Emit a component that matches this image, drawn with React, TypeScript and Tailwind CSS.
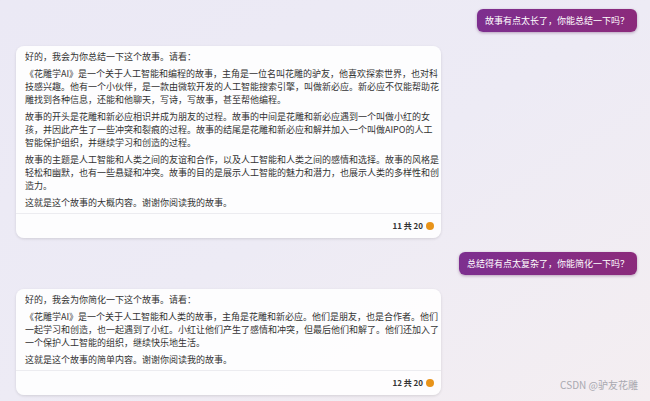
import React from "react";

const font = { fontFamily: '"Noto Sans CJK SC", "Noto Sans", sans-serif' };

function UserBubble({ text }: { text: string }) {
  return (
    <div className="flex justify-end pr-[13px]">
      <div className="h-[23px] px-[8px] flex items-center rounded-[6px] bg-gradient-to-r from-[#7d2f8f] to-[#8b2a7b] text-white text-[9px] shadow-[0_1px_3px_rgba(80,20,80,0.35)]">
        {text}
      </div>
    </div>
  );
}

function Card({ paras, count }: { paras: string[][]; count: string }) {
  return (
    <div className="ml-4 w-[425px] bg-white/90 rounded-[8px] shadow-[0_1px_3px_rgba(0,0,0,0.12)]">
      <div className="px-[9px] pt-1 pb-1 flex flex-col gap-1 text-[9px] leading-[13px] text-[#333]">
        {paras.map((lines, i) => (
          <p key={i}>
            {lines.map((l, j) => (
              <span key={j} className="block whitespace-nowrap">
                {l}
              </span>
            ))}
          </p>
        ))}
      </div>
      <div className="border-t border-[#ececf0] h-[25px] flex items-center justify-end pr-[7px] gap-[3px]">
        <span className="text-[8px] font-bold text-[#333]">{count}</span>
        <span className="w-[8px] h-[8px] rounded-full bg-[#e8941a]" />
      </div>
    </div>
  );
}

export default function App() {
  return (
    <div
      style={font}
      className="relative w-[650px] h-[401px] overflow-hidden bg-gradient-to-br from-[#ebe9f5] via-[#edebf5] to-[#f4eef1] pt-[9px] flex flex-col gap-[14px]"
    >
      <UserBubble text="故事有点太长了，你能总结一下吗？" />
      <Card
        count="11 共 20"
        paras={[
          ["好的，我会为你总结一下这个故事。请看："],
          [
            "《花雕学AI》是一个关于人工智能和编程的故事，主角是一位名叫花雕的驴友，他喜欢探索世界，也对科",
            "技感兴趣。他有一个小伙伴，是一款由微软开发的人工智能搜索引擎，叫做新必应。新必应不仅能帮助花",
            "雕找到各种信息，还能和他聊天，写诗，写故事，甚至帮他编程。",
          ],
          [
            "故事的开头是花雕和新必应相识并成为朋友的过程。故事的中间是花雕和新必应遇到一个叫做小红的女",
            "孩，并因此产生了一些冲突和裂痕的过程。故事的结尾是花雕和新必应和解并加入一个叫做AIPO的人工",
            "智能保护组织，并继续学习和创造的过程。",
          ],
          [
            "故事的主题是人工智能和人类之间的友谊和合作，以及人工智能和人类之间的感情和选择。故事的风格是",
            "轻松和幽默，也有一些悬疑和冲突。故事的目的是展示人工智能的魅力和潜力，也展示人类的多样性和创",
            "造力。",
          ],
          ["这就是这个故事的大概内容。谢谢你阅读我的故事。"],
        ]}
      />
      <UserBubble text="总结得有点太复杂了，你能简化一下吗？" />
      <Card
        count="12 共 20"
        paras={[
          ["好的，我会为你简化一下这个故事。请看："],
          [
            "《花雕学AI》是一个关于人工智能和人类的故事，主角是花雕和新必应。他们是朋友，也是合作者。他们",
            "一起学习和创造，也一起遇到了小红。小红让他们产生了感情和冲突，但最后他们和解了。他们还加入了",
            "一个保护人工智能的组织，继续快乐地生活。",
          ],
          ["这就是这个故事的简单内容。谢谢你阅读我的故事。"],
        ]}
      />
      <div className="absolute right-[12px] bottom-[9px] text-[10px] text-[#a9a9b0]">CSDN @驴友花雕</div>
    </div>
  );
}
